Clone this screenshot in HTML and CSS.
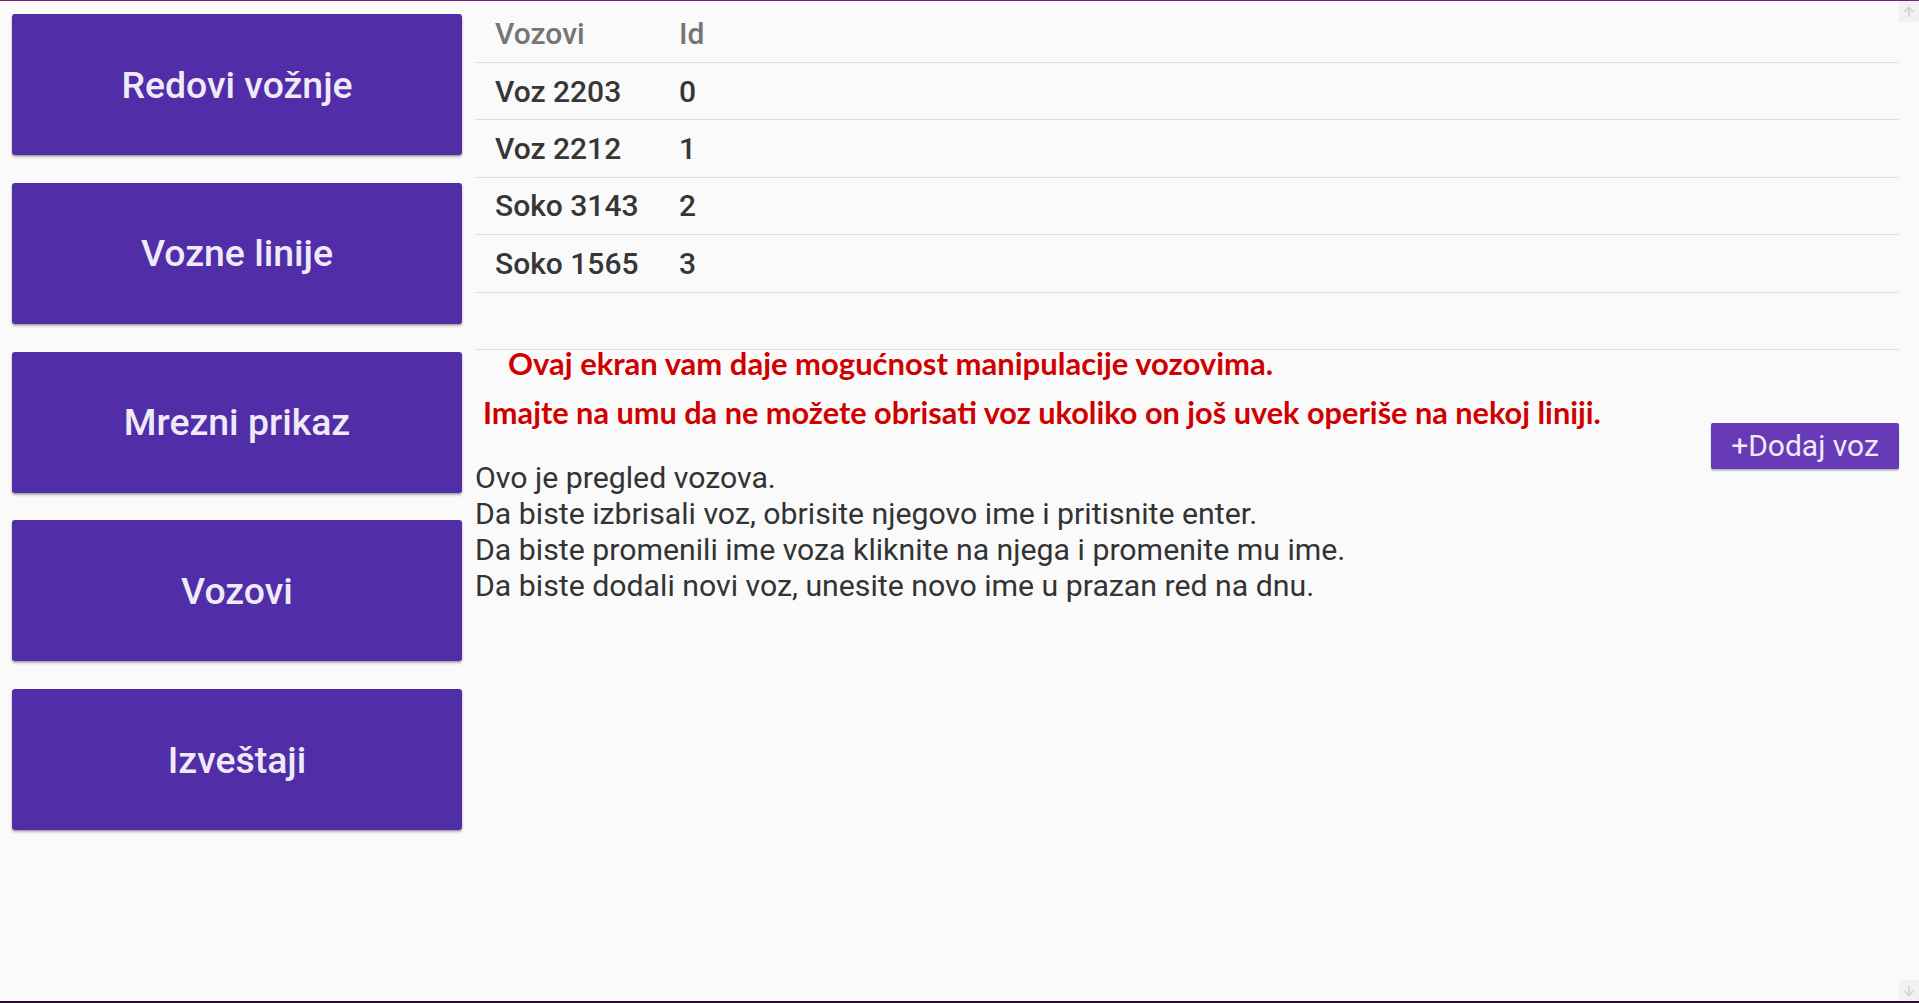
FILE: index.html
```html
<!DOCTYPE html>
<html lang="sr">
<head>
<meta charset="utf-8">
<title>Vozovi</title>
<link rel="stylesheet" href="styles.css">
</head>
<body>
<div class="window">
  <div class="app">
    <nav class="menu">
      <button class="menu-btn">Redovi vožnje</button>
      <button class="menu-btn">Vozne linije</button>
      <button class="menu-btn">Mrezni prikaz</button>
      <button class="menu-btn">Vozovi</button>
      <button class="menu-btn">Izveštaji</button>
    </nav>
    <main class="content">
      <div class="grid">
        <div class="row head"><div class="c1">Vozovi</div><div class="c2">Id</div></div>
        <div class="row"><div class="c1">Voz 2203</div><div class="c2">0</div></div>
        <div class="row"><div class="c1">Voz 2212</div><div class="c2">1</div></div>
        <div class="row"><div class="c1">Soko 3143</div><div class="c2">2</div></div>
        <div class="row"><div class="c1">Soko 1565</div><div class="c2">3</div></div>
        <div class="row empty"><div class="c1"></div><div class="c2"></div></div>
      </div>
      <div class="notes">
        <div class="notes-text">
          <h3 class="warn warn-1">Ovaj ekran vam daje mogućnost manipulacije vozovima.</h3>
          <h2 class="warn warn-2">Imajte na umu da ne možete obrisati voz ukoliko on još uvek operiše na nekoj liniji.</h2>
          <p class="help">Ovo je pregled vozova.<br>Da biste izbrisali voz, obrisite njegovo ime i pritisnite enter.<br>Da biste promenili ime voza kliknite na njega i promenite mu ime.<br>Da biste dodali novi voz, unesite novo ime u prazan red na dnu.</p>
        </div>
        <button class="add-btn">+Dodaj voz</button>
      </div>
    </main>
    <div class="scrollbar">
      <div class="sb-arrow"><svg width="12" height="12" viewBox="0 0 12 12"><path d="M6 11V1.5M1.5 6L6 1.5 10.5 6" fill="none" stroke="#d3d3d3" stroke-width="1.6"/></svg></div>
      <div class="sb-track"></div>
      <div class="sb-arrow"><svg width="12" height="12" viewBox="0 0 12 12"><path d="M6 1v9.5M1.5 6L6 10.5 10.5 6" fill="none" stroke="#d3d3d3" stroke-width="1.6"/></svg></div>
    </div>
  </div>
</div>
</body>
</html>
```
FILE: styles.css
```css
html, body {
  margin: 0;
  padding: 0;
  background: #fafafa;
}
.window {
  height: 1003px;
  box-sizing: border-box;
  border-top: 1px solid #7b1f86;
  border-bottom: 2px solid #2a0d2a;
  overflow: hidden;
}
.app {
  display: flex;
  height: 100%;
  font-family: Roboto, "Noto Sans", sans-serif;
}
.menu {
  display: flex;
  flex-direction: column;
  gap: 27.8px;
  width: 450px;
  padding: 13px 0 0 12px;
  flex: none;
}
.menu-btn {
  height: 141px;
  border: none;
  border-radius: 3px;
  background: #512da8;
  color: #efeaf8;
  font-family: Roboto, sans-serif;
  font-weight: 500;
  font-size: 37.4px;
  box-shadow: 0 2px 3px rgba(0,0,0,.28), 0 1px 1px rgba(0,0,0,.14);
  padding: 0;
}
.content {
  flex: 1;
  margin-left: 13px;
  min-width: 0;
}
.grid {
  padding-top: 4.6px;
}
.row {
  display: flex;
  align-items: center;
  height: 57.4px;
  box-sizing: border-box;
  border-bottom: 1px solid #dedede;
  font-size: 30px;
  font-weight: 500;
  color: #363636;
}
.row.head {
  color: #757575;
}
.c1 {
  width: 204px;
  padding-left: 20px;
  box-sizing: border-box;
}
.notes {
  display: flex;
  justify-content: space-between;
  align-items: flex-start;
}
.notes-text {
  flex: 1;
}
.warn {
  margin: 0;
  color: #d00000;
  font-family: Lato, "Open Sans", sans-serif;
  font-weight: 700;
}
.warn-1 {
  font-size: 31px;
  line-height: 26px;
  padding-left: 33px;
}
.warn-2 {
  font-size: 30.7px;
  line-height: 40px;
  margin-top: 17px;
  padding-left: 8px;
}
.help {
  margin: 27px 0 0;
  font-size: 30.25px;
  line-height: 36px;
  color: #333;
}
.add-btn {
  margin-top: 73px;
  width: 188px;
  height: 46px;
  border: none;
  border-radius: 2px;
  background: #673ab7;
  color: #efeaf8;
  font-family: Roboto, sans-serif;
  font-size: 30px;
  font-weight: 400;
  padding: 0;
  box-shadow: 0 2px 2px rgba(0,0,0,.2), 0 1px 1px rgba(0,0,0,.12);
}
.scrollbar {
  width: 20px;
  flex: none;
  display: flex;
  flex-direction: column;
}
.sb-arrow {
  height: 21px;
  background: #f1f1f1;
  display: flex;
  align-items: center;
  justify-content: center;
}
.sb-track {
  flex: 1;
}
```
